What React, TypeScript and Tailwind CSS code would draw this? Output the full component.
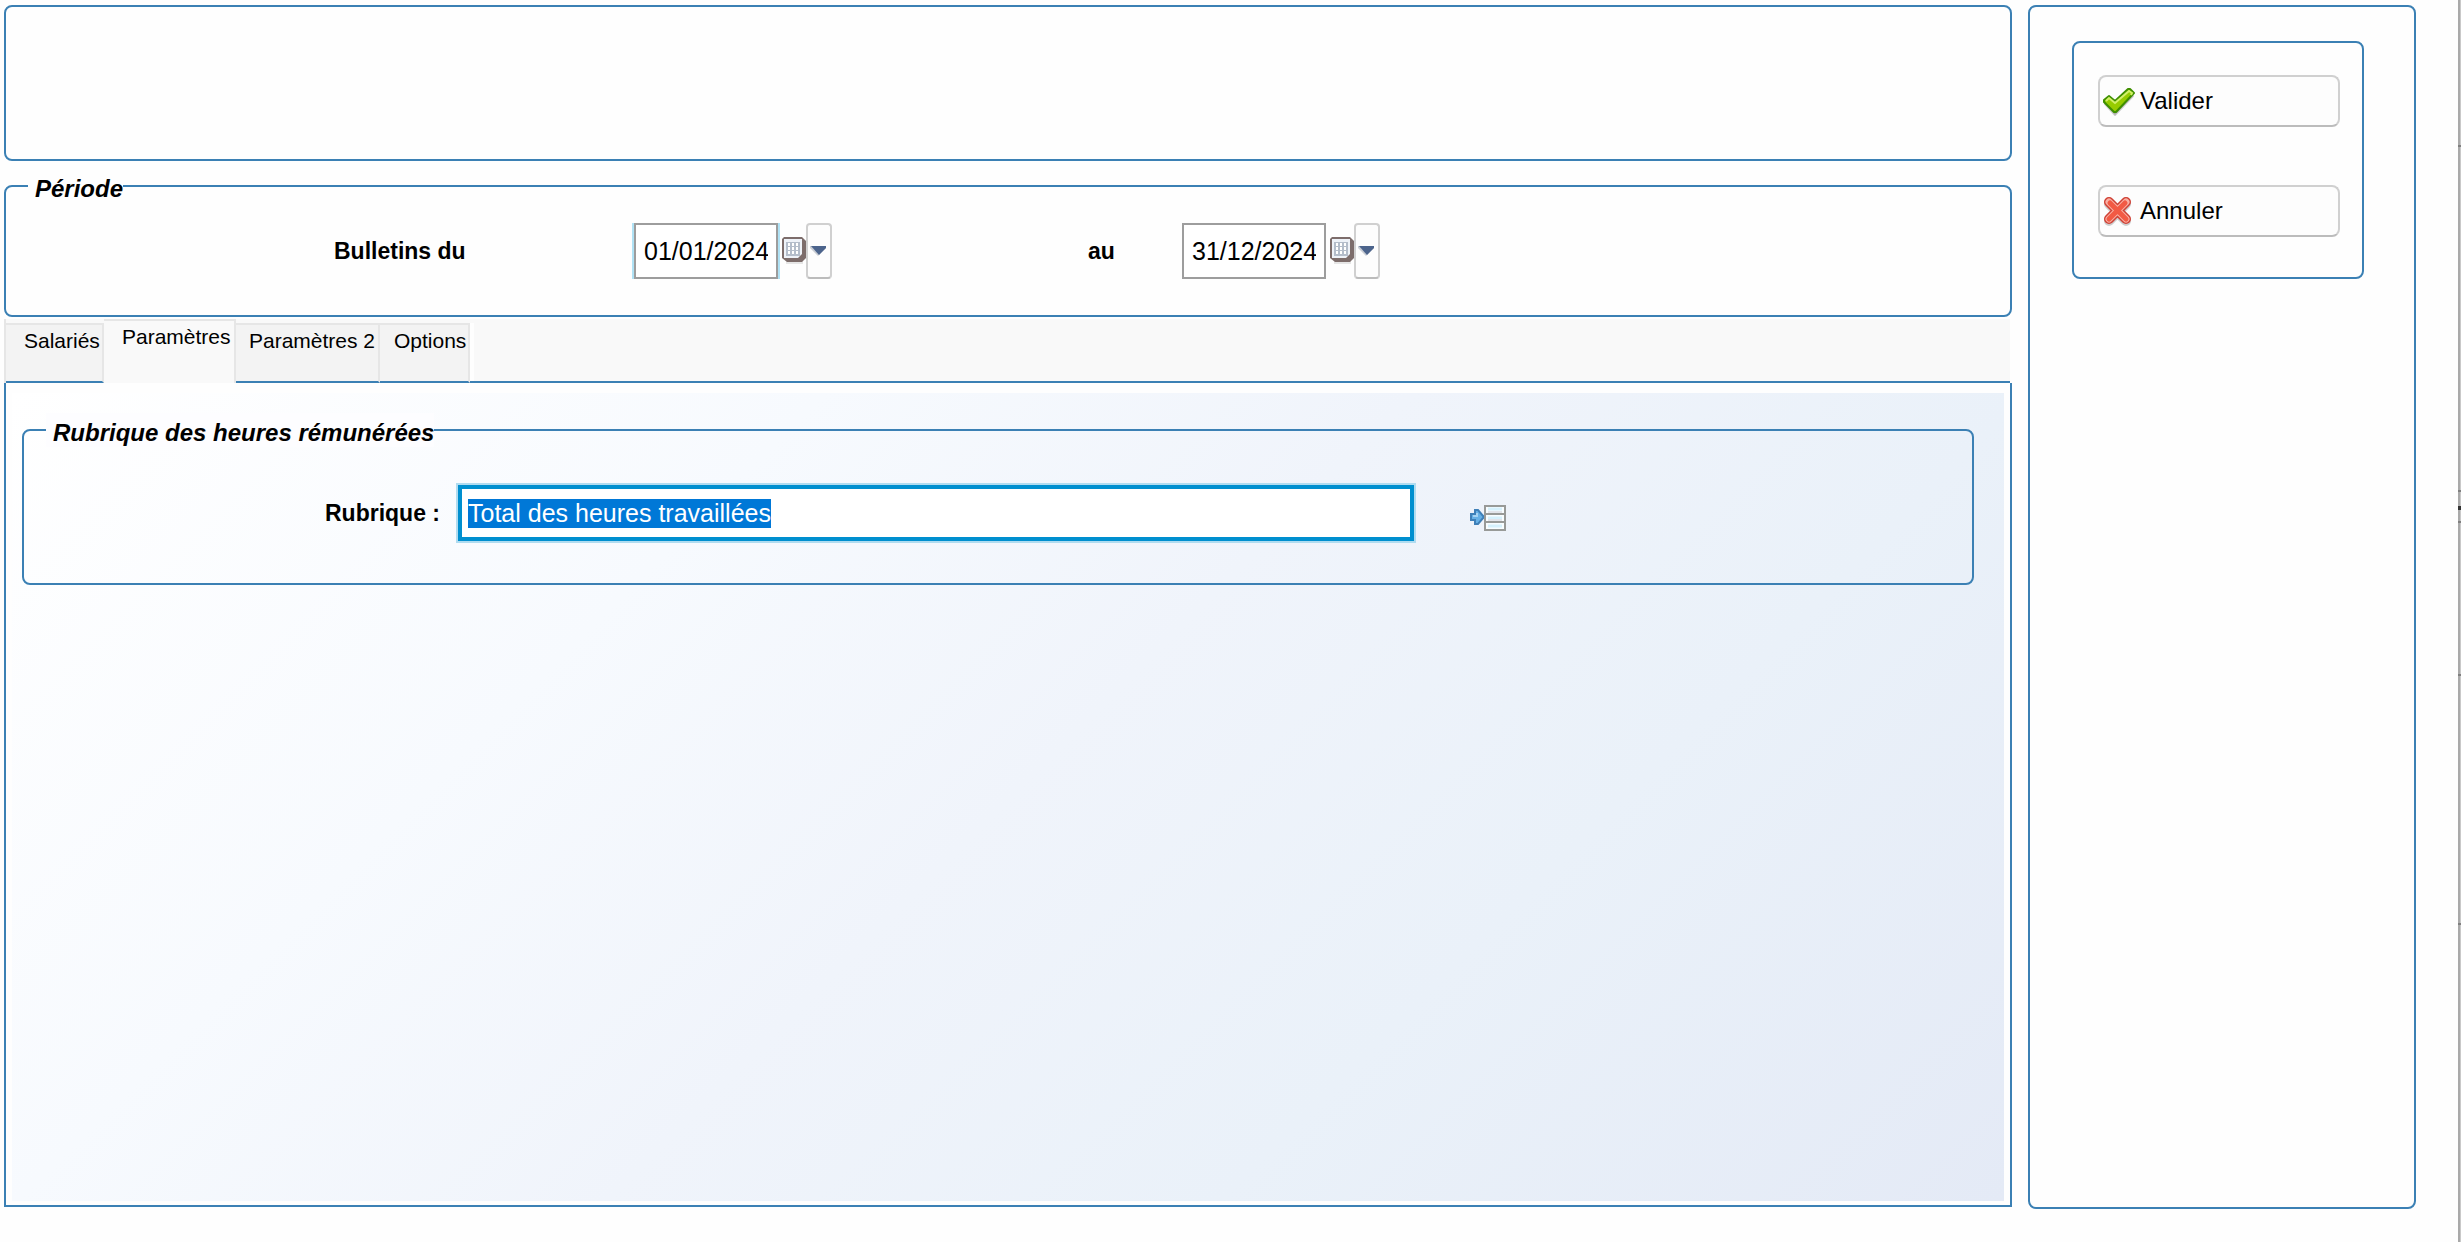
import { useEffect, useRef, useState } from "react";
import type { ReactNode } from "react";

const TABS = [
  { label: "Salariés", box: "w-[98px] pl-[18px]" },
  { label: "Paramètres", box: "w-[132px] pl-[18px]" },
  { label: "Paramètres 2", box: "w-36 pl-[13px]" },
  { label: "Options", box: "w-[90px] pl-[14px]" },
];

function CheckIcon() {
  return (
    <svg width="34" height="30" viewBox="0 0 34 30" aria-hidden="true">
      <path d="M3 16 L8 11 L13 16 L26 3 L31 8 L13 27 Z" transform="translate(0 2)" fill="#00000030" stroke="#00000030" strokeWidth="2" strokeLinejoin="round" />
      <path d="M2 14 L7 10 L13 15 L26 3 L28 3 L32 7 L14 26 L12 26 L2 16 Z" fill="#96cc00" stroke="#3f8f00" strokeWidth="2" strokeLinejoin="round" />
      <path d="M4 15 L7 12 L13 17 L27 5 L30 7 L29 9" fill="none" stroke="#d2f06a" strokeWidth="2" />
    </svg>
  );
}

function CrossIcon() {
  return (
    <svg width="34" height="32" viewBox="0 0 34 32" aria-hidden="true">
      <path d="M7 9 L24 26 M24 9 L7 26" stroke="#00000030" strokeWidth="10" strokeLinecap="round" />
      <path d="M7 7 L24 24 M24 7 L7 24" stroke="#cf4034" strokeWidth="10" strokeLinecap="round" />
      <path d="M7 7 L24 24 M24 7 L7 24" stroke="#f9b0a4" strokeWidth="7" strokeLinecap="round" />
      <path d="M8 8 L24 24 M23 8 L7 24" stroke="#f25a44" strokeWidth="5" strokeLinecap="round" />
    </svg>
  );
}

function CalendarIcon() {
  return (
    <svg width="24" height="30" viewBox="0 0 24 30" aria-hidden="true">
      <rect x="4" y="24" width="17" height="4" fill="#00000018" />
      <path d="M2 1 H20 L24 5 V22 L20 26 H5 L0 22 V3 Z" fill="#7d6d6b" />
      <rect x="2" y="3" width="18" height="19" fill="#eef2f8" />
      <rect x="4" y="6" width="14" height="14" fill="#b4bdca" />
      <g fill="#ffffff">
        {[7, 11, 15].map((y) =>
          [6, 10, 14].map((x) => <rect key={`${x}-${y}`} x={x} y={y} width="2" height="3" />)
        )}
      </g>
      <path d="M20 18 V22 H16 Z" fill="#7d6d6b" />
    </svg>
  );
}

function ListIcon() {
  return (
    <svg width="36" height="26" viewBox="0 0 36 26" aria-hidden="true">
      <path d="M1 9 H5 V5 H8 L14 12 L8 19 H5 V15 H1 Z" fill="#66b0e6" stroke="#3f80b8" strokeWidth="2" />
      <path d="M3 11 H7 V8" fill="none" stroke="#a5d3f3" strokeWidth="2" />
      <rect x="15" y="1" width="20" height="24" fill="#f8fdff" stroke="#989a98" strokeWidth="2" />
      <path d="M18 4 H32 M18 13 H32 M18 21 H32" stroke="#d5f1fd" strokeWidth="3" />
      <path d="M18 7 H32 M18 15 H32" stroke="#e2e4ea" strokeWidth="2" />
      <path d="M15 9 H35 M15 17 H35" stroke="#989a98" strokeWidth="2" />
    </svg>
  );
}

function DateField({ id, value, focused }: { id: string; value: string; focused?: boolean }) {
  return (
    <div className="flex items-center">
      <div className={focused ? "border-x-2 border-[#b0e2f5]" : "border-x-2 border-transparent"}>
        <input
          id={id}
          type="text"
          defaultValue={value}
          className="block h-14 w-36 border-2 border-[#9d9d9d] bg-white px-2 text-[25px] leading-[30px] outline-none"
        />
      </div>
      <button type="button" aria-label="Calendrier" className="ml-0.5">
        <CalendarIcon />
      </button>
      <button
        type="button"
        aria-label="Choisir une date"
        className="flex h-14 w-[26px] items-center justify-center rounded border-2 border-[#d0d0d0] border-b-[#bcbcbc] bg-[#fdfdfd]"
      >
        <svg width="18" height="12" viewBox="0 0 18 12" aria-hidden="true">
          <path d="M0 1 H16 V3 L8 11 L0 3 Z" fill="#c9cdd4" />
          <path d="M1 1 H16 V3 L9 10 Z" fill="#4c648c" />
        </svg>
      </button>
    </div>
  );
}

function ActionButton({ icon, children }: { icon: ReactNode; children: ReactNode }) {
  return (
    <button
      type="button"
      className="flex h-[52px] w-full items-center gap-1 rounded-lg border-2 border-[#d0d0d0] border-b-[#bcbcbc] bg-[#fdfdfd] pl-0.5 text-left text-2xl leading-7"
    >
      {icon}
      <span>{children}</span>
    </button>
  );
}

function RubriqueInput() {
  const ref = useRef<HTMLInputElement>(null);
  useEffect(() => {
    ref.current?.focus();
    ref.current?.select();
  }, []);
  return (
    <input
      ref={ref}
      id="rubrique"
      type="text"
      defaultValue="Total des heures travaillées"
      className="block h-14 w-full border-4 border-[#008fcf] bg-white px-1.5 text-[25px] leading-[30px] outline-2 outline-[#b0dcf0] selection:bg-[#0078d7] selection:text-white"
    />
  );
}

function EdgeStrip() {
  return (
    <div className="flex w-[3px] shrink-0 flex-col bg-linear-to-r from-[#a9a9a9] from-66% to-[#c9c9c9] to-66%">
      <div className="h-[147px] border-b-2 border-[#808080]" />
      <div className="h-[345px] border-b-2 border-[#808080]" />
      <div className="h-[31px] border-b-2 border-[#808080] pt-3.5">
        <div className="h-1 bg-[#333333]" />
      </div>
      <div className="h-[153px] border-b-2 border-[#808080]" />
      <div className="h-[249px] border-b-2 border-[#808080]" />
    </div>
  );
}

export default function App() {
  const [active, setActive] = useState(1);
  return (
    <div className="flex h-screen bg-[#fefefe] font-['Liberation_Sans',Arial,sans-serif] text-black">
      <main className="flex min-w-0 flex-1 gap-4 pt-[5px] pb-[33px] pl-1">
        <div className="flex min-w-0 flex-1 flex-col pb-0.5">
          <section aria-label="Informations" className="h-[156px] shrink-0 rounded-lg border-2 border-[#3b80b4]" />

          <fieldset className="mt-2 h-[148px] shrink-0 rounded-lg border-2 border-[#3b80b4] px-[22px]">
            <legend className="pt-1.5 pl-[7px] text-2xl leading-7 font-bold italic">Période</legend>
            <div className="flex items-center pt-5">
              <label htmlFor="date-from" className="w-[604px] pl-[306px] text-[23px] font-bold">
                Bulletins du
              </label>
              <DateField id="date-from" value="01/01/2024" focused />
              <label htmlFor="date-to" className="w-[348px] pl-[256px] text-[23px] font-bold">
                au
              </label>
              <DateField id="date-to" value="31/12/2024" />
            </div>
          </fieldset>

          <div className="mt-0.5 mr-0.5 flex h-16 shrink-0 items-end border-l-2 border-[#e6e6e6] bg-[#f9f9f9]">
            <div role="tablist" className="flex items-end">
              {TABS.map(({ label, box }, i) => (
                <button
                  key={label}
                  type="button"
                  role="tab"
                  aria-selected={i === active}
                  onClick={() => setActive(i)}
                  className={
                    i === active
                      ? `flex h-16 items-start border-t-2 border-r-2 border-[#e6e6e6] bg-[#f9f9f9] pt-1 text-[21px] leading-6 whitespace-nowrap ${box}`
                      : `flex h-[60px] items-start border-t-2 border-r-2 border-b-2 border-[#e6e6e6] border-b-[#3b80b4] bg-[#f3f3f3] pt-1 text-[21px] leading-6 whitespace-nowrap ${box}`
                  }
                >
                  {label}
                </button>
              ))}
            </div>
            <div className="h-[60px] flex-1 border-b-2 border-[#3b80b4]">
              <div className="h-full w-1 bg-[#fefefe]" />
            </div>
          </div>

          <div role="tabpanel" className="flex min-h-0 flex-1 border-2 border-t-0 border-[#3b80b4] bg-[#fefefe] px-1.5 pt-2.5 pb-1">
            <div className="flex-1 bg-[linear-gradient(135deg,#ffffff,#f7fafe_29%,#f0f4fb_50%,#eaf1f9_72%,#e4eaf6)] pt-5 pr-[30px] pl-2.5">
              <fieldset className="h-[172px] rounded-lg border-2 border-[#3b80b4] px-[22px]">
                <legend className="bg-[#fdfdff] pt-1.5 pl-[7px] text-2xl leading-7 font-bold italic">
                  Rubrique des heures rémunérées
                </legend>
                <div className="flex items-center pt-[38px]">
                  <label htmlFor="rubrique" className="w-[412px] shrink-0 pr-[18px] text-right text-[23px] font-bold">
                    Rubrique :
                  </label>
                  <div className="flex-1">
                    <RubriqueInput />
                  </div>
                  <button type="button" aria-label="Sélectionner une rubrique" className="mr-[444px] ml-14 pt-2.5">
                    <ListIcon />
                  </button>
                </div>
              </fieldset>
            </div>
          </div>
        </div>

        <aside className="mr-[42px] w-[388px] shrink-0 rounded-lg border-2 border-[#3b80b4] px-[42px] pt-[34px]">
          <div className="mr-2 flex h-[238px] flex-col gap-[58px] rounded-lg border-2 border-[#3b80b4] pt-8 pr-[22px] pl-6">
            <ActionButton icon={<CheckIcon />}>Valider</ActionButton>
            <ActionButton icon={<CrossIcon />}>Annuler</ActionButton>
          </div>
        </aside>
      </main>
      <EdgeStrip />
    </div>
  );
}
